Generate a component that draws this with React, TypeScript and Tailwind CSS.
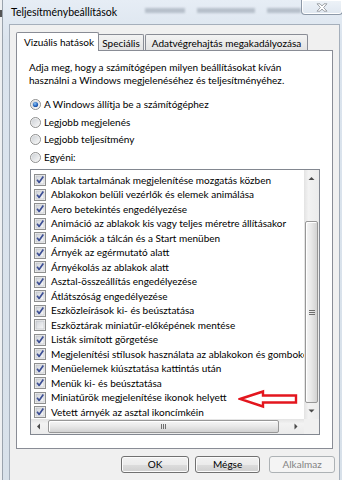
import React from "react";

const items: [string, boolean][] = [
  ["Ablak tartalmának megjelenítése mozgatás közben", true],
  ["Ablakokon belüli vezérlők és elemek animálása", true],
  ["Aero betekintés engedélyezése", true],
  ["Animáció az ablakok kis vagy teljes méretre állításakor", true],
  ["Animációk a tálcán és a Start menüben", true],
  ["Árnyék az egérmutató alatt", true],
  ["Árnyékolás az ablakok alatt", true],
  ["Asztal-összeállítás engedélyezése", true],
  ["Átlátszóság engedélyezése", true],
  ["Eszközleírások ki- és beúsztatása", true],
  ["Eszköztárak miniatűr-előképének mentése", false],
  ["Listák simított görgetése", true],
  ["Megjelenítési stílusok használata az ablakokon és gombokon", true],
  ["Menüelemek kiúsztatása kattintás után", true],
  ["Menük ki- és beúsztatása", true],
  ["Miniatűrök megjelenítése ikonok helyett", true],
  ["Vetett árnyék az asztal ikoncímkéin", true],
];

const radios: [string, boolean][] = [
  ["A Windows állítja be a számítógéphez", true],
  ["Legjobb megjelenés", false],
  ["Legjobb teljesítmény", false],
  ["Egyéni:", false],
];

function CheckBox({ checked }: { checked: boolean }) {
  return (
    <svg width="12" height="12" viewBox="0 0 12 12" className="shrink-0">
      <defs>
        <linearGradient id="cbg" x1="0" y1="0" x2="1" y2="1">
          <stop offset="0" stopColor="#cfd3d9" />
          <stop offset="1" stopColor="#fafafa" />
        </linearGradient>
      </defs>
      <rect x="0.5" y="0.5" width="11" height="11" fill="#f4f4f4" stroke="#8e8f8f" />
      <rect x="2" y="2" width="8" height="8" fill="url(#cbg)" stroke="#b6bac0" strokeWidth="0.6" />
      {checked && (
        <path d="M3.1 5.8 L5.1 8.4 L9.3 2.6" fill="none" stroke="#3c4e94" strokeWidth="1.7" strokeLinejoin="round" />
      )}
    </svg>
  );
}

function Radio({ checked }: { checked: boolean }) {
  return (
    <svg width="11" height="11" viewBox="0 0 11 11" className="shrink-0">
      <defs>
        <linearGradient id="rbg" x1="0" y1="0" x2="1" y2="1">
          <stop offset="0" stopColor="#cdd1d6" />
          <stop offset="1" stopColor="#f7f7f7" />
        </linearGradient>
        <radialGradient id="rdot" cx="0.4" cy="0.35" r="0.7">
          <stop offset="0" stopColor="#8fc4f5" />
          <stop offset="0.6" stopColor="#2d6fc4" />
          <stop offset="1" stopColor="#17449a" />
        </radialGradient>
      </defs>
      <circle cx="5.5" cy="5.5" r="5" fill="#f4f4f4" stroke="#8e8f8f" />
      <circle cx="5.5" cy="5.5" r="3.8" fill="url(#rbg)" />
      {checked && <circle cx="5.5" cy="5.5" r="2.6" fill="url(#rdot)" />}
    </svg>
  );
}

function Tri({ dir }: { dir: "up" | "down" | "left" | "right" }) {
  const p =
    dir === "up"
      ? "M0.5 4 L3.5 1 L6.5 4 Z"
      : dir === "down"
      ? "M0.5 1.5 L3.5 4.5 L6.5 1.5 Z"
      : dir === "left"
      ? "M4 0.5 L1 3.5 L4 6.5 Z"
      : "M1.5 0.5 L4.5 3.5 L1.5 6.5 Z";
  return (
    <svg width="7" height="7" viewBox="0 0 7 7">
      <path d={p} fill="#4a4a4a" />
    </svg>
  );
}

function WinButton({ label, w, disabled }: { label: string; w: string; disabled?: boolean }) {
  return (
    <div
      className={
        disabled
          ? `${w} h-[17px] rounded-[3px] border border-[#adb2b5] bg-[#f4f4f4] text-[#838383] flex items-center justify-center`
          : `${w} h-[17px] rounded-[3px] border border-[#707070] bg-[linear-gradient(#f2f2f2,#ebebeb_50%,#dddddd_50%,#cfcfcf)] shadow-[inset_0_0_0_1px_#fbfbfb] text-black flex items-center justify-center`
      }
    >
      {label}
    </div>
  );
}

export default function App() {
  return (
    <div className="relative w-[342px] h-[480px] overflow-hidden bg-[linear-gradient(#e6edf5,#dbe4ee_40px,#d8e1ea)] flex [font-family:Lato,sans-serif] text-[10px] text-black">
      {/* background window glimpse on the left */}
      <div className="w-[3px] h-full bg-[#eef0f2] border-r border-[#9aa3ad] flex flex-col">
        <div className="mt-[10px] h-[7px] w-[2px] bg-[#555]" />
      </div>

      <div className="flex-1 flex flex-col">
        {/* title bar */}
        <div className="h-[24px] flex items-start">
          <div className="ml-[8px] mt-[6px] leading-[13px] text-[10.5px] text-black">Teljesítménybeállítások</div>
          <div className="ml-[28px] mt-[8px] flex gap-[12px] blur-[1.2px] opacity-50">
            <div className="w-[40px] h-[5px] bg-[#8c96a3]" />
            <div className="w-[58px] h-[5px] bg-[#8c96a3]" />
            <div className="w-[34px] h-[5px] bg-[#8c96a3]" />
          </div>
          <div className="ml-auto mr-[1px] w-[42px] h-[15px] rounded-b-[4px] border border-t-0 border-[#8d99a8] bg-[linear-gradient(#eef3f8,#dfe7f0)] shadow-[inset_0_0_0_1px_#ffffff] flex items-center justify-center">
            <svg width="12" height="9" viewBox="0 0 12 9">
              <path
                d="M1 0.8 L4 0.8 L6 3 L8 0.8 L11 0.8 L7.6 4.5 L11 8.2 L8 8.2 L6 6 L4 8.2 L1 8.2 L4.4 4.5 Z"
                fill="#ffffff"
                stroke="#8a8f96"
                strokeWidth="0.8"
                strokeLinejoin="round"
              />
            </svg>
          </div>
        </div>

        {/* client area */}
        <div className="ml-[6px] mr-[4px] flex-1 bg-[#f0f0f0] border-l border-t border-r border-[#a5afbb] pl-[6px] pr-[4px] pt-[7px] flex flex-col">
          {/* tabs */}
          <div className="h-[19px] flex items-end">
            <div className="relative z-10 w-[83px] h-[19px] bg-white border border-b-0 border-[#898c95] rounded-t-[2px] pl-[7px] pt-[3px] leading-[13px]">
              Vizuális hatások
            </div>
            <div className="w-[45px] h-[17px] border border-b-0 border-l-0 border-[#898c95] rounded-tr-[2px] bg-[linear-gradient(#f3f3f3,#e2e2e2)] flex justify-center pt-[2px] leading-[13px]">
              Speciális
            </div>
            <div className="ml-[1px] w-[163px] h-[17px] border border-b-0 border-[#898c95] rounded-t-[2px] bg-[linear-gradient(#f3f3f3,#e2e2e2)] flex justify-center pt-[2px] leading-[13px]">
              Adatvégrehajtás megakadályozása
            </div>
          </div>

          {/* panel */}
          <div className="-mt-px w-[317px] h-[399px] bg-white border border-[#898c95] pl-[12px] pt-[10px] flex flex-col">
            <div className="leading-[13px]">
              <div>Adja meg, hogy a számítógépen milyen beállításokat kíván</div>
              <div>használni a Windows megjelenéséhez és teljesítményéhez.</div>
            </div>

            <div className="mt-[9px] flex flex-col">
              {radios.map(([label, on]) => (
                <div key={label} className="h-[17.5px] flex items-center pl-[1px]">
                  <Radio checked={on} />
                  <span className="ml-[3px] leading-[13px]">{label}</span>
                </div>
              ))}
            </div>

            {/* list box */}
            <div className="mt-[3px] ml-[1px] w-[290px] h-[266px] border border-[#828790] flex flex-col">
              <div className="h-[249px] flex">
                <div className="w-[273px] overflow-hidden pt-[3px] pl-[3px]">
                  {items.map(([label, on]) => (
                    <div key={label} className="h-[14.5px] flex items-center whitespace-nowrap">
                      <CheckBox checked={on} />
                      <span className="ml-[5px] leading-[13px]">{label}</span>
                    </div>
                  ))}
                </div>
                {/* vertical scrollbar */}
                <div className="w-[15px] h-full bg-[linear-gradient(90deg,#e3e3e3,#f2f2f2_30%,#ebebeb)] flex flex-col">
                  <div className="h-[18px] flex items-center justify-center">
                    <Tri dir="up" />
                  </div>
                  <div className="flex-1 flex flex-col">
                    <div className="mt-[33px] h-[182px] mx-[1px] rounded-[2px] border border-[#979797] bg-[linear-gradient(90deg,#f6f6f6,#e9e9e9_45%,#d2d2d2)] shadow-[inset_1px_1px_0_#ffffff] flex flex-col items-center justify-center gap-[1px]">
                      <div className="w-[6px] h-px bg-[#6e6e6e]" />
                      <div className="w-[6px] h-px bg-[#6e6e6e]" />
                      <div className="w-[6px] h-px bg-[#6e6e6e]" />
                    </div>
                  </div>
                  <div className="h-[16px] flex items-center justify-center">
                    <Tri dir="down" />
                  </div>
                </div>
              </div>
              <div className="h-[15px] flex">
                {/* horizontal scrollbar */}
                <div className="w-[273px] h-full bg-[linear-gradient(#e3e3e3,#f2f2f2_30%,#ebebeb)] flex items-center">
                  <div className="w-[16px] h-full flex items-center justify-center">
                    <Tri dir="left" />
                  </div>
                  <div className="ml-[1px] w-[231px] h-[13px] rounded-[2px] border border-[#979797] bg-[linear-gradient(#f6f6f6,#e9e9e9_45%,#d2d2d2)] shadow-[inset_1px_1px_0_#ffffff] flex items-center justify-center gap-[1px]">
                    <div className="w-px h-[5px] bg-[#6e6e6e]" />
                    <div className="w-px h-[5px] bg-[#6e6e6e]" />
                    <div className="w-px h-[5px] bg-[#6e6e6e]" />
                  </div>
                  <div className="ml-auto w-[16px] h-full flex items-center justify-center">
                    <Tri dir="right" />
                  </div>
                </div>
                <div className="w-[15px] h-full bg-[#f0f0f0]" />
              </div>
            </div>
          </div>

          {/* buttons */}
          <div className="mt-[7px] flex justify-end">
            <WinButton label="OK" w="w-[68px]" />
            <div className="ml-[6px]">
              <WinButton label="Mégse" w="w-[65px]" />
            </div>
            <div className="ml-[9px]">
              <WinButton label="Alkalmaz" w="w-[66px]" disabled />
            </div>
          </div>
        </div>
      </div>

      {/* red annotation arrow */}
      <svg width="62" height="20" viewBox="0 0 62 20" className="absolute left-[238px] top-[389px]">
        <path
          d="M2 10 L25 2.5 L25 6.5 L58 6.5 L58 13.5 L25 13.5 L25 17.5 Z"
          fill="#ffffff"
          stroke="#e3161e"
          strokeWidth="2.4"
          strokeLinejoin="miter"
        />
      </svg>
    </div>
  );
}
